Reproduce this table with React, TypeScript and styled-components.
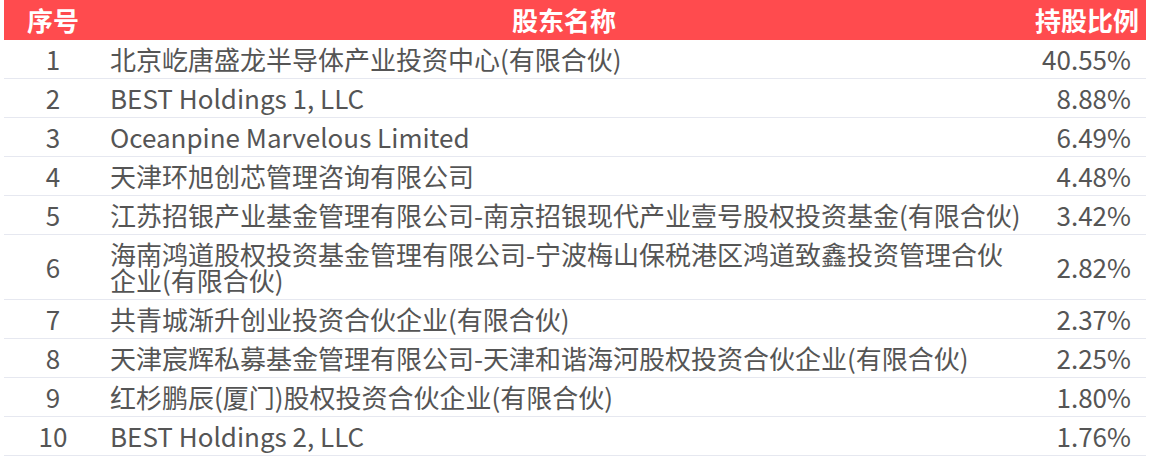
import React from 'react';
import styled, { createGlobalStyle } from 'styled-components';

const GlobalStyle = createGlobalStyle`
  html, body {
    margin: 0;
    padding: 0;
    background: #ffffff;
  }
  body {
    font-family: "Noto Sans CJK SC", "Noto Sans", sans-serif;
  }
`;

const Page = styled.div`
  padding: 0 4px;
  width: 1150px;
  box-sizing: border-box;
`;

const Row = styled.div<{ $head?: boolean }>`
  display: grid;
  grid-template-columns: 98px 1fr 120px;
  align-items: center;
  box-sizing: border-box;
  padding: ${({ $head }) => ($head ? '0' : '6px 0')};
  height: ${({ $head }) => ($head ? '40px' : 'auto')};
  background: ${({ $head }) => ($head ? '#ff4b4e' : 'transparent')};
  color: ${({ $head }) => ($head ? '#ffffff' : '#555555')};
  font-weight: ${({ $head }) => ($head ? 700 : 400)};
  font-size: 26px;
  line-height: 26px;
  border-bottom: ${({ $head }) => ($head ? 'none' : '1px solid #e6e8f0')};
`;

const Cell = styled.div<{ $align: 'left' | 'center' | 'right' }>`
  text-align: ${({ $align }) => $align};
  padding: ${({ $align }) =>
    $align === 'left' ? '0 0 0 8px' : $align === 'right' ? '0 15px 0 0' : '0'};
`;

const HeadCell = styled(Cell)`
  padding: ${({ $align }) => ($align === 'right' ? '0 7px 0 0' : '0')};
  white-space: nowrap;
`;

const rows = [
  ['1', '北京屹唐盛龙半导体产业投资中心(有限合伙)', '40.55%'],
  ['2', 'BEST Holdings 1, LLC', '8.88%'],
  ['3', 'Oceanpine Marvelous Limited', '6.49%'],
  ['4', '天津环旭创芯管理咨询有限公司', '4.48%'],
  ['5', '江苏招银产业基金管理有限公司-南京招银现代产业壹号股权投资基金(有限合伙)', '3.42%'],
  ['6', '海南鸿道股权投资基金管理有限公司-宁波梅山保税港区鸿道致鑫投资管理合伙企业(有限合伙)', '2.82%'],
  ['7', '共青城渐升创业投资合伙企业(有限合伙)', '2.37%'],
  ['8', '天津宸辉私募基金管理有限公司-天津和谐海河股权投资合伙企业(有限合伙)', '2.25%'],
  ['9', '红杉鹏辰(厦门)股权投资合伙企业(有限合伙)', '1.80%'],
  ['10', 'BEST Holdings 2, LLC', '1.76%'],
];

export default function App() {
  return (
    <Page>
      <GlobalStyle />
      <Row $head>
        <HeadCell $align="center">序号</HeadCell>
        <HeadCell $align="center">股东名称</HeadCell>
        <HeadCell $align="right">持股比例</HeadCell>
      </Row>
      {rows.map(([no, name, pct]) => (
        <Row key={no}>
          <Cell $align="center">{no}</Cell>
          <Cell $align="left">{name}</Cell>
          <Cell $align="right">{pct}</Cell>
        </Row>
      ))}
    </Page>
  );
}
